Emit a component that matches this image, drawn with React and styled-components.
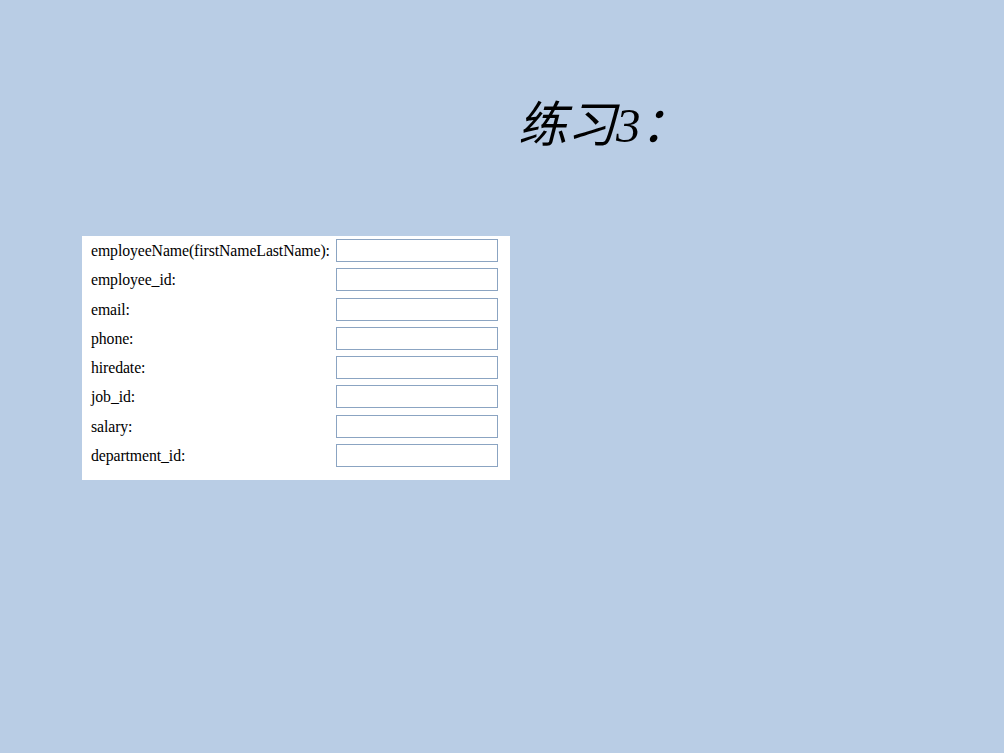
import React from 'react';
import styled, { createGlobalStyle } from 'styled-components';

const GlobalStyle = createGlobalStyle`
  html, body {
    margin: 0;
    padding: 0;
  }
  body {
    background: #b9cde5;
    font-family: "Liberation Serif", "Times New Roman", serif;
  }
`;

const fields = [
  'employeeName(firstNameLastName):',
  'employee_id:',
  'email:',
  'phone:',
  'hiredate:',
  'job_id:',
  'salary:',
  'department_id:',
];

const Slide = styled.div`
  width: 1004px;
  height: 753px;
  background: #b9cde5;
  display: flex;
  flex-direction: column;
`;

const Title = styled.h1`
  margin: 0;
  padding: 93px 0 0 518px;
  font-family: "Liberation Serif", "Noto Sans CJK SC", serif;
  font-size: 49px;
  font-style: italic;
  font-weight: normal;
  line-height: 66px;
  color: #000;
`;

const Panel = styled.div`
  align-self: flex-start;
  margin: 77px 0 0 82px;
  width: 428px;
  box-sizing: border-box;
  background: #fff;
  padding: 3px 12px 13px 9px;
  display: grid;
  grid-template-columns: 1fr 162px;
  column-gap: 3px;
  row-gap: 6.3px;
`;

const Label = styled.label`
  font-size: 15.8px;
  color: #000;
  display: flex;
  align-items: center;
  white-space: nowrap;
  letter-spacing: -0.1px;
  padding-top: 1px;
`;

const Field = styled.input`
  width: 162px;
  height: 23px;
  box-sizing: border-box;
  border: 1px solid #8ba4c2;
  background: #fff;
  margin: 0;
  padding: 0 2px;
  outline: none;
`;

export default function App() {
  return (
    <Slide>
      <GlobalStyle />
      <Title>练习3：</Title>
      <Panel>
        {fields.map((f) => (
          <React.Fragment key={f}>
            <Label>{f}</Label>
            <Field type="text" />
          </React.Fragment>
        ))}
      </Panel>
    </Slide>
  );
}
